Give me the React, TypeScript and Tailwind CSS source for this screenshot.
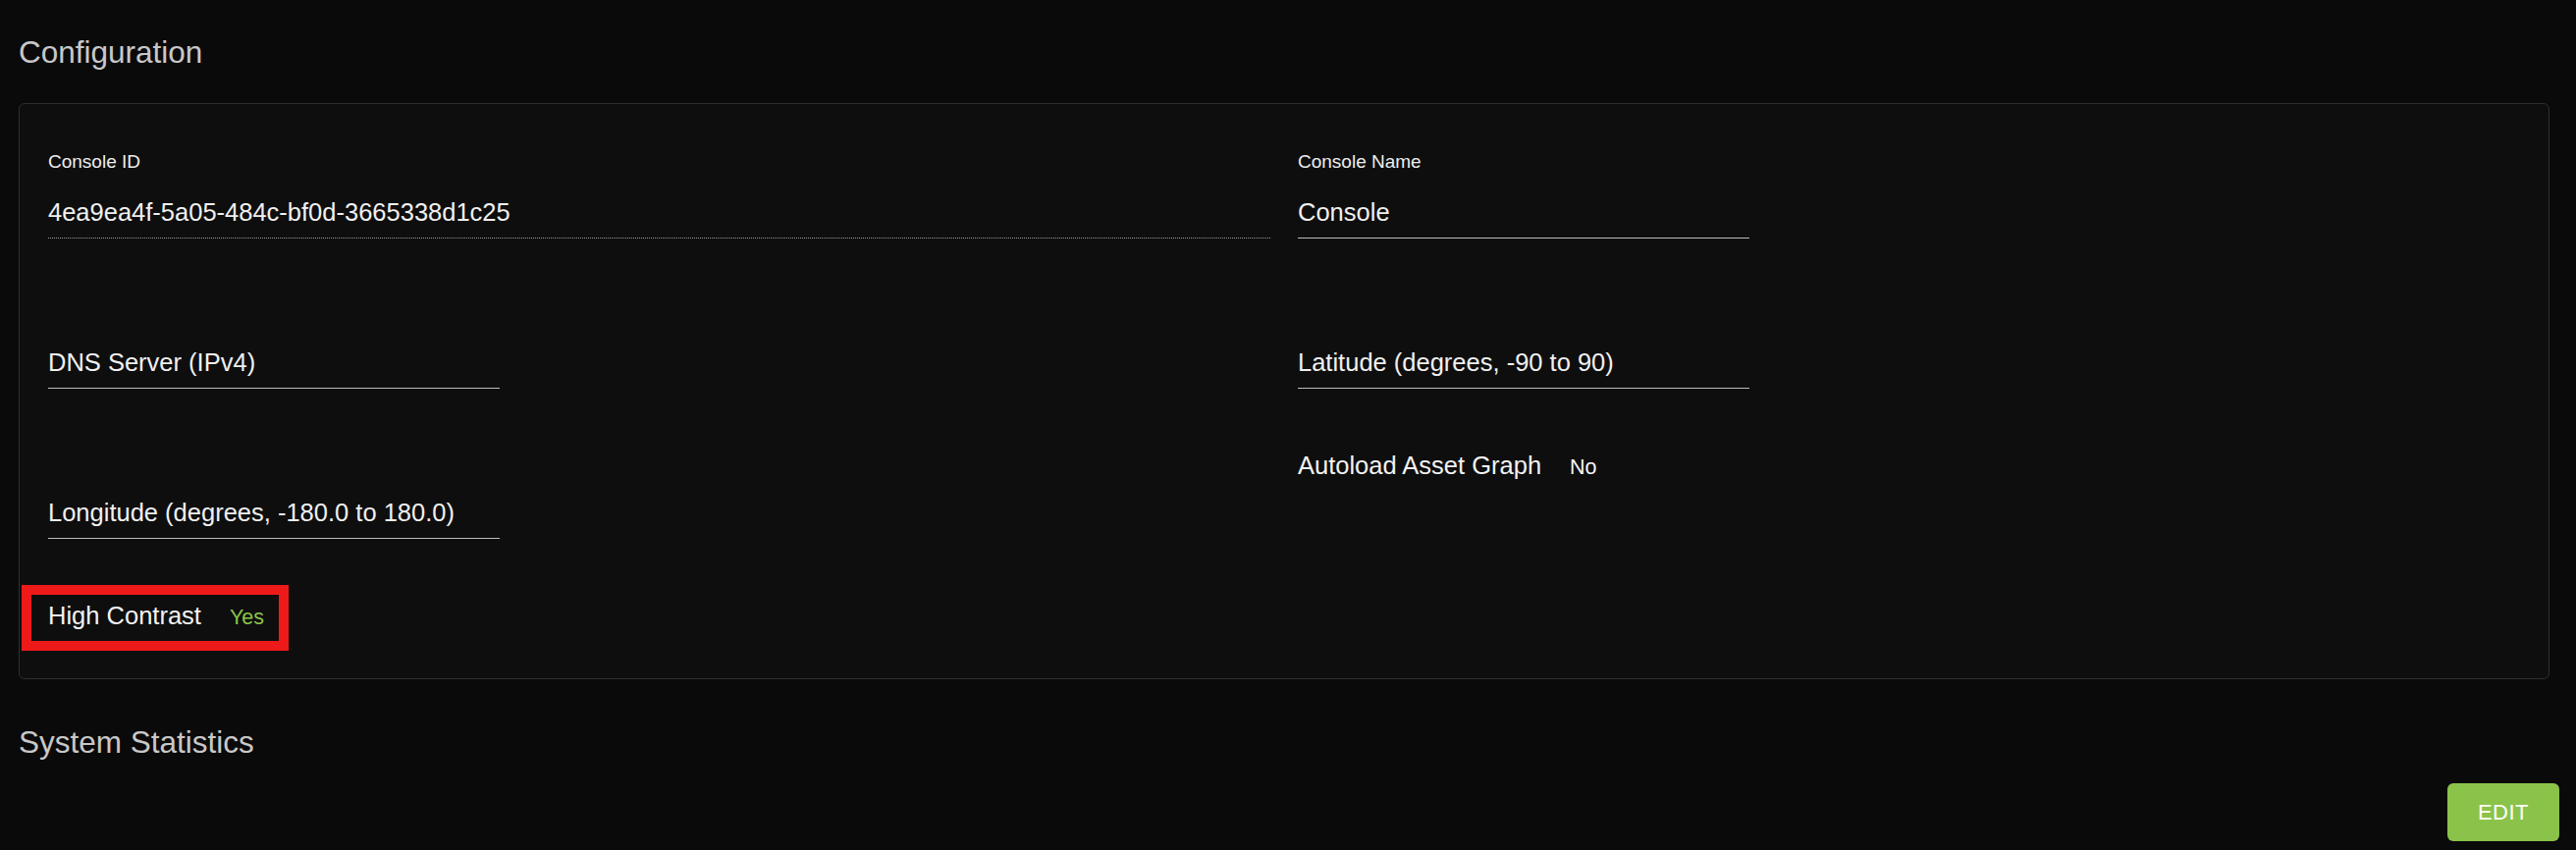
type FieldProps = {
  label: string;
  value?: string;
  wide?: boolean;
  dotted?: boolean;
};

function TextField({ label, value, wide, dotted }: FieldProps) {
  const hasValue = value !== undefined;
  return (
    <div className={wide ? 'w-full' : 'w-[460px]'}>
      {hasValue ? (
        <div className="h-[24px] text-[19px] leading-[24px] text-[#ededed]">{label}</div>
      ) : (
        <div className="h-[24px]" />
      )}
      <div
        className={`mt-[20px] pb-[8px] border-b ${
          dotted ? 'border-dotted border-[#9a9a9a]' : 'border-solid border-[#bdbdbd]'
        }`}
      >
        <div className="h-[37px] text-[25.5px] leading-[38px] text-[#f0f0f0]">{hasValue ? value : label}</div>
      </div>
    </div>
  );
}

function Toggle({ label, on, marked }: { label: string; on: boolean; marked?: boolean }) {
  return (
    <div className="relative mt-[2px] flex items-baseline gap-[29px]">
      <span className="text-[25.5px] leading-[26px] text-[#f2f2f2]">{label}</span>
      <span className={`text-[21.5px] leading-[26px] ${on ? 'text-[#8bc34a]' : 'text-[#f5f5f5]'}`}>
        {on ? 'Yes' : 'No'}
      </span>
      {/* highlight annotation */}
      {marked && (
        <span className="pointer-events-none absolute -left-[27px] -top-[18px] h-[67px] w-[272px] border-[10px] border-[#ee1a1a]" />
      )}
    </div>
  );
}

export default function App() {
  return (
    <div className="min-h-screen bg-[#0a0a0a] font-['Liberation_Sans',Arial,sans-serif] pl-[19px] pr-[17px] pt-[35px]">
      <div className="mr-[10px]">
        <h2 className="h-[36px] text-[31.5px] leading-[36px] font-normal text-[#c8c8c8]">Configuration</h2>

        <div className="mt-[34px] rounded-[6px] border border-[#2e2e2e] bg-[#0e0e0e] px-[29px] pt-[47px] pb-[49px]">
          <div className="grid grid-cols-2 items-start gap-x-[28px] gap-y-[63px]">
            <TextField label="Console ID" value="4ea9ea4f-5a05-484c-bf0d-3665338d1c25" wide dotted />
            <TextField label="Console Name" value="Console" />

            <TextField label="DNS Server (IPv4)" />
            <TextField label="Latitude (degrees, -90 to 90)" />

            <TextField label="Longitude (degrees, -180.0 to 180.0)" />
            <Toggle label="Autoload Asset Graph" on={false} />

            <Toggle label="High Contrast" on marked />
          </div>
        </div>

        <h2 className="mt-[46px] h-[36px] text-[31.5px] leading-[36px] font-normal text-[#c8c8c8]">System Statistics</h2>
      </div>

      <div className="mt-[24px] flex justify-end">
        <button className="flex h-[59px] w-[114px] items-center justify-center rounded-[6px] bg-[#8bc34a] text-[22px] tracking-[0.5px] text-white">
          EDIT
        </button>
      </div>
    </div>
  );
}
